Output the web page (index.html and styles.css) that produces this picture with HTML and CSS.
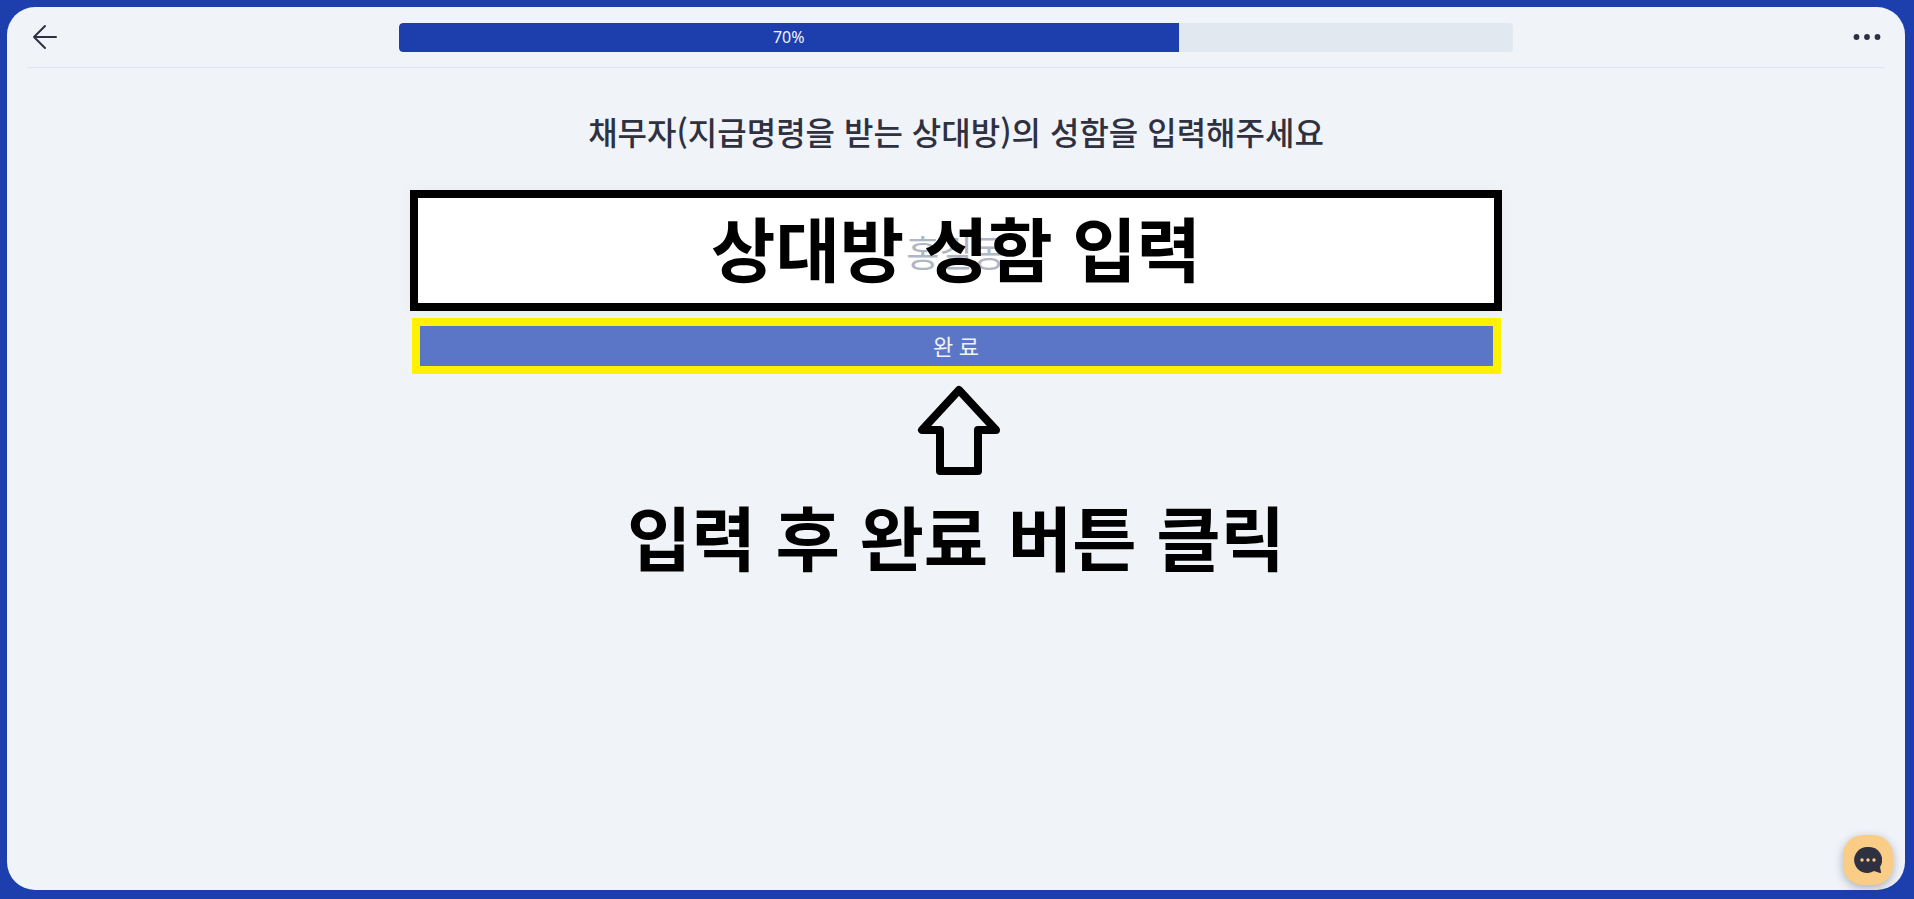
FILE: index.html
```html
<!DOCTYPE html>
<html lang="ko">
<head>
    <meta charset="UTF-8">
    <meta name="viewport" content="width=device-width, initial-scale=1.0">
    <title>채무자 성함 입력</title>
    <link rel="stylesheet" href="styles.css">
</head>
<body>
<div class="card">

    <header class="header">
        <button class="icon-button" type="button" aria-label="뒤로">
            <svg width="36" height="36" viewBox="0 0 36 36" fill="none" stroke="#2f3140" stroke-width="2" stroke-linecap="round" stroke-linejoin="round">
                <path d="M29 18H7M18 7L7 18l11 11"/>
            </svg>
        </button>
        <div class="progress">
            <div class="progress-bar" style="width: 70%">70%</div>
        </div>
        <button class="icon-button" type="button" aria-label="메뉴">
            <svg width="36" height="36" viewBox="0 0 36 36" fill="#2f3140">
                <circle cx="7.5" cy="18" r="2.9"/>
                <circle cx="18" cy="18" r="2.9"/>
                <circle cx="28.5" cy="18" r="2.9"/>
            </svg>
        </button>
    </header>

    <main class="content">
        <h1 class="title">채무자(지급명령을 받는 상대방)의 성함을 입력해주세요</h1>

        <form class="form">
            <div class="field">
                <input class="name-input" id="name" type="text" placeholder="홍길동">
                <label class="note field-note" for="name">상대방 성함 입력</label>
            </div>
            <button class="submit-button" type="button">완 료</button>
        </form>

        <div class="guide">
            <svg class="guide-arrow" width="90" height="90" viewBox="0 0 90 90" fill="none" stroke="#000" stroke-width="8" stroke-linejoin="round">
                <path d="M48 5L11 45h18v41h38V45h18z"/>
            </svg>
            <p class="note">입력 후 완료 버튼 클릭</p>
        </div>
    </main>

</div>

<button class="chat-button" type="button" aria-label="채팅">
    <svg width="28" height="28" viewBox="0 0 28 28">
        <path fill="#2f3140" d="M14 1a13 13 0 1 0 6 24l6 2c1 0 1 0 1-1l-1-5A13 13 0 0 0 14 1z"/>
        <circle cx="8" cy="14" r="1.7" fill="#facd87"/>
        <circle cx="14" cy="14" r="1.7" fill="#facd87"/>
        <circle cx="20" cy="14" r="1.7" fill="#facd87"/>
    </svg>
</button>
</body>
</html>
```
FILE: styles.css
```css
* {
    box-sizing: border-box;
}

body {
    margin: 0;
    padding: 7px 9px 9px 7px;
    height: 100vh;
    background-color: #1d3fae;
    color: #2f3140;
    font-family: "Noto Sans", "Noto Sans CJK KR", sans-serif;
}

button,
input {
    font-family: inherit;
}

.card {
    height: 100%;
    padding: 0 20px;
    background-color: #f0f4f9;
    border-radius: 28px;
}

.header {
    display: flex;
    align-items: center;
    justify-content: space-between;
    height: 61px;
    border-bottom: 1px solid #e1e5eb;
}

.icon-button {
    display: flex;
    padding: 0;
    border: none;
    background: none;
    cursor: pointer;
}

.progress {
    width: 60%;
    height: 29px;
    background-color: #e1e8ef;
    border-radius: 4px;
    overflow: hidden;
}

.progress-bar {
    height: 100%;
    background-color: #1d3fae;
    border-radius: 4px 0 0 4px;
    color: #f0f4f9;
    font-size: 16px;
    line-height: 28px;
    text-align: center;
}

.content {
    display: flex;
    flex-direction: column;
    align-items: center;
}

.title {
    margin: 38px 0 34px;
    font-family: "Noto Sans CJK KR", sans-serif;
    font-size: 32px;
    font-weight: 500;
    line-height: 50px;
    text-align: center;
}

.form {
    display: flex;
    flex-direction: column;
    align-items: center;
    gap: 7px;
    width: 1092px;
    max-width: 100%;
}

.field {
    position: relative;
    width: 100%;
}

.name-input {
    display: block;
    width: 100%;
    height: 121px;
    padding: 6px 0 0;
    border: 8px solid #000;
    border-radius: 0;
    background-color: #fff;
    box-shadow: 0 0 16px rgba(0, 0, 0, 0.04);
    color: #2f3140;
    font-size: 36px;
    text-align: center;
    outline: none;
}

.name-input::placeholder {
    color: #b0b7c4;
    opacity: 1;
}

.note {
    margin: 0;
    color: #000;
    font-family: "Noto Sans CJK KR", sans-serif;
    font-size: 70px;
    font-weight: 700;
    line-height: 100px;
    text-align: center;
}

/* 입력창 위에 겹치는 안내 문구 */
.field-note {
    position: absolute;
    inset: 7px 0;
    pointer-events: none;
}

.submit-button {
    width: calc(100% - 3px);
    height: 56px;
    padding: 0;
    border: 8px solid #fff200;
    background-color: #5c76c7;
    color: #f0f4f9;
    font-size: 22px;
    line-height: 38px;
    cursor: pointer;
}

.guide {
    display: flex;
    flex-direction: column;
    align-items: center;
    gap: 11px;
    margin-top: 11px;
}

.chat-button {
    position: fixed;
    right: 21px;
    bottom: 14px;
    display: flex;
    align-items: center;
    justify-content: center;
    width: 50px;
    height: 50px;
    padding: 0;
    border: none;
    border-radius: 20px;
    background-color: #facd87;
    box-shadow: 0 3px 10px rgba(47, 49, 64, 0.35);
    cursor: pointer;
}
```
